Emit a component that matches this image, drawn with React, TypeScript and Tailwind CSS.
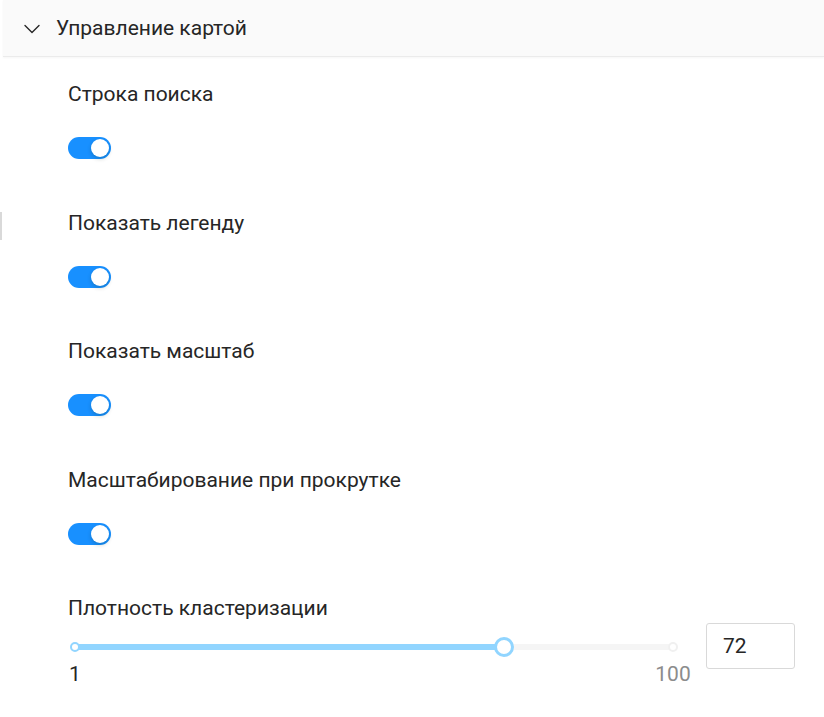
import { useState } from "react";

const font = { fontFamily: "Roboto, 'Noto Sans', sans-serif" };

function Toggle({ on, onClick }: { on: boolean; onClick: () => void }) {
  return (
    <button
      onClick={onClick}
      className={`relative flex h-[22px] w-[43px] items-center rounded-full px-[2px] ${
        on ? "justify-end bg-[#1890ff]" : "justify-start bg-[#bfbfbf]"
      }`}
    >
      <span className="h-[18px] w-[18px] rounded-full bg-white shadow-[0_2px_4px_rgba(0,35,11,0.2)]" />
    </button>
  );
}

export default function App() {
  const [toggles, setToggles] = useState({
    search: true,
    legend: true,
    scale: true,
    scrollZoom: true,
  });
  const [density, setDensity] = useState(72);

  const items: { key: keyof typeof toggles; label: string }[] = [
    { key: "search", label: "Строка поиска" },
    { key: "legend", label: "Показать легенду" },
    { key: "scale", label: "Показать масштаб" },
    { key: "scrollZoom", label: "Масштабирование при прокрутке" },
  ];

  const pct = ((density - 1) / 99) * 100;

  return (
    <div className="flex min-h-[717px] w-full bg-white text-[#262626]" style={font}>
      {/* left edge strip */}
      <div className="w-[3px] shrink-0 pt-[212px]">
        <div className="h-[28px] w-[2px] bg-[#d9d9d9]" />
      </div>

      <div className="flex-1">
        {/* Collapse header */}
        <div className="flex h-[57px] items-center border-b border-[#ebebeb] bg-[#fafafa] pl-[18px] shadow-[0_1px_2px_rgba(0,0,0,0.04)]">
          <svg width="22" height="20" viewBox="0 0 22 20" fill="none" className="mr-[13px] mt-[2px]">
            <path d="M4 6.5L11 13.5L18 6.5" stroke="#262626" strokeWidth="1.4" strokeLinecap="round" strokeLinejoin="round" />
          </svg>
          <span className="text-[21px] leading-7">Управление картой</span>
        </div>

        {/* Body */}
        <div className="pl-[65px] pt-[23px]">
          {items.map((it) => (
            <div key={it.key} className="mb-[49.5px]">
              <div className="text-[21px] leading-7">{it.label}</div>
              <div className="mt-[29px]">
                <Toggle
                  on={toggles[it.key]}
                  onClick={() => setToggles({ ...toggles, [it.key]: !toggles[it.key] })}
                />
              </div>
            </div>
          ))}

          <div>
            <div className="text-[21px] leading-7">Плотность кластеризации</div>
            <div className="mt-[1px] flex items-start">
              {/* slider */}
              <div className="relative h-[60px] w-[622px]">
                <div className="absolute left-[7px] right-[17px] top-[21px] h-[6px]">
                  <div className="absolute inset-0 rounded-full bg-[#f5f5f5]" />
                  <div
                    className="absolute left-0 top-0 h-full rounded-full bg-[#91d5ff]"
                    style={{ width: `${pct}%` }}
                  />
                  <span className="absolute left-0 top-1/2 h-[10px] w-[10px] -translate-x-1/2 -translate-y-1/2 rounded-full border-2 border-[#91d5ff] bg-white" />
                  <span className="absolute right-0 top-1/2 h-[10px] w-[10px] translate-x-1/2 -translate-y-1/2 rounded-full border-2 border-[#f0f0f0] bg-white" />
                  <span
                    className="absolute top-1/2 h-[20px] w-[20px] -translate-x-1/2 -translate-y-1/2 rounded-full border-[3px] border-[#91d5ff] bg-white"
                    style={{ left: `${pct}%` }}
                  />
                </div>
                <span className="absolute left-[7px] top-[37px] -translate-x-1/2 text-[21px] leading-7 text-[#262626]">
                  1
                </span>
                <span className="absolute right-[17px] top-[37px] translate-x-1/2 text-[21px] leading-7 text-[#8c8c8c]">
                  100
                </span>
              </div>

              <input
                value={density}
                onChange={(e) => {
                  const v = Math.max(1, Math.min(100, Number(e.target.value) || 1));
                  setDensity(v);
                }}
                className="ml-[16px] h-[46px] w-[89px] rounded-[3px] border border-[#d9d9d9] px-[16px] text-[21px] text-[#262626] outline-none"
              />
            </div>
          </div>
        </div>
      </div>
    </div>
  );
}
